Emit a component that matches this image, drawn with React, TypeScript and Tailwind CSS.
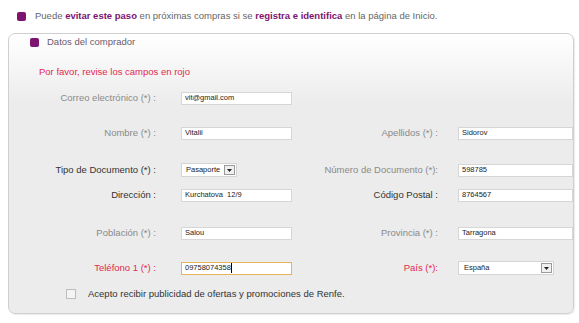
import React from "react";

type Campo = {
  label: string;
  tono: "gris" | "oscuro" | "rojo";
  valor?: string;
  tipo?: "input" | "select" | "selectLargo";
  foco?: boolean;
};

type Fila = { izq: Campo; der?: Campo; mt: string };

const filas: Fila[] = [
  { izq: { label: "Correo electrónico (*) :", tono: "gris", valor: "vit@gmail.com" }, mt: "mt-[13px]" },
  {
    izq: { label: "Nombre (*) :", tono: "gris", valor: "Vitalii" },
    der: { label: "Apellidos (*) :", tono: "gris", valor: "Sidorov" },
    mt: "mt-[21px]",
  },
  {
    izq: { label: "Tipo de Documento (*) :", tono: "oscuro", valor: "Pasaporte", tipo: "select" },
    der: { label: "Número de Documento (*):", tono: "gris", valor: "598785" },
    mt: "mt-[23px]",
  },
  {
    izq: { label: "Dirección :", tono: "oscuro", valor: "Kurchatova  12/9" },
    der: { label: "Código Postal :", tono: "oscuro", valor: "8764567" },
    mt: "mt-[11px]",
  },
  {
    izq: { label: "Población (*) :", tono: "gris", valor: "Salou" },
    der: { label: "Provincia (*) :", tono: "gris", valor: "Tarragona" },
    mt: "mt-[24px]",
  },
  {
    izq: { label: "Teléfono 1 (*) :", tono: "rojo", valor: "09758074358", foco: true },
    der: { label: "País (*):", tono: "rojo", valor: "España", tipo: "selectLargo" },
    mt: "mt-[21px]",
  },
];

const colorLabel = {
  gris: "text-[#8a8a8a]",
  oscuro: "text-[#333333]",
  rojo: "text-[#e3284f]",
};

function Flecha() {
  return (
    <span className="flex h-[10px] w-[11px] items-center justify-center border border-[#9a9a9a] bg-[#f0f0f0]">
      <svg width="5" height="3" viewBox="0 0 5 3">
        <path d="M0 0 L5 0 L2.5 3 Z" fill="#222" />
      </svg>
    </span>
  );
}

function Control({ campo, ancho }: { campo: Campo; ancho: string }) {
  if (campo.tipo === "select") {
    return (
      <div className="flex h-[14px] w-[56px] items-center justify-between border border-[#d4d4d4] bg-white pl-[4px] pr-[1px] text-[7.5px] text-[#222]">
        <span>{campo.valor}</span>
        <Flecha />
      </div>
    );
  }
  if (campo.tipo === "selectLargo") {
    return (
      <div className="flex h-[14px] w-[96px] items-center justify-between border border-[#d4d4d4] bg-white pl-[5px] pr-[1px] text-[7.5px] text-[#222]">
        <span>{campo.valor}</span>
        <Flecha />
      </div>
    );
  }
  return (
    <div
      className={`flex h-[13px] ${ancho} items-center bg-white pl-[3px] text-[7.5px] text-[#222] ${
        campo.foco ? "border border-[#e8b45a]" : "border border-[#d6d6d6]"
      }`}
    >
      <span className="whitespace-pre">{campo.valor}</span>
      {campo.foco && <span className="h-[10px] w-px bg-black" />}
    </div>
  );
}

export default function App() {
  return (
    <div
      className="h-[323px] w-[579px] overflow-hidden bg-white text-[9.5px] leading-[12px]"
      style={{ fontFamily: '"Liberation Sans", Arial, sans-serif' }}
    >
      {/* Aviso superior */}
      <div className="flex h-[12px] items-center pl-[17px] mt-[10px] text-[#666]">
        <span className="h-[9px] w-[9px] rounded-[2px] bg-[#7d1470]" />
        <p className="ml-[9px]">
          Puede <b className="text-[#7d1470]">evitar este paso</b> en próximas compras si se{" "}
          <b className="text-[#7d1470]">registra e identifica</b> en la página de Inicio.
        </p>
      </div>

      {/* Panel */}
      <div className="ml-[8px] mt-[11px] h-[281px] w-[566px] rounded-[7px] border border-[#cfcfcf] bg-gradient-to-b from-white to-[#ececec] to-[25%] shadow-[1px_1px_1px_rgba(0,0,0,0.08)]">
        <div className="flex h-[12px] items-center pl-[21px] mt-[2px] text-[#6d5a6b]">
          <span className="h-[9px] w-[9px] rounded-[2px] bg-[#7d1470]" />
          <span className="ml-[8px]">Datos del comprador</span>
        </div>

        <p className="ml-[30px] mt-[18px] h-[12px] text-[#e3284f]">Por favor, revise los campos en rojo</p>

        {filas.map((fila, i) => (
          <div key={i} className={`${fila.mt} flex h-[14px] items-center`}>
            <div className={`w-[147px] text-right ${colorLabel[fila.izq.tono]}`}>{fila.izq.label}</div>
            <div className="ml-[25px] w-[112px]">
              <Control campo={fila.izq} ancho="w-[111px]" />
            </div>
            {fila.der && (
              <>
                <div className={`w-[145px] text-right ${colorLabel[fila.der.tono]}`}>{fila.der.label}</div>
                <div className="ml-[20px]">
                  <Control campo={fila.der} ancho="w-[115px]" />
                </div>
              </>
            )}
          </div>
        ))}

        <div className="ml-[57px] mt-[13px] flex h-[12px] items-center text-[#333]">
          <span className="h-[10px] w-[10px] border border-[#bdbdbd] bg-[#f4f4f4]" />
          <span className="ml-[12px]">Acepto recibir publicidad de ofertas y promociones de Renfe.</span>
        </div>
      </div>
    </div>
  );
}
